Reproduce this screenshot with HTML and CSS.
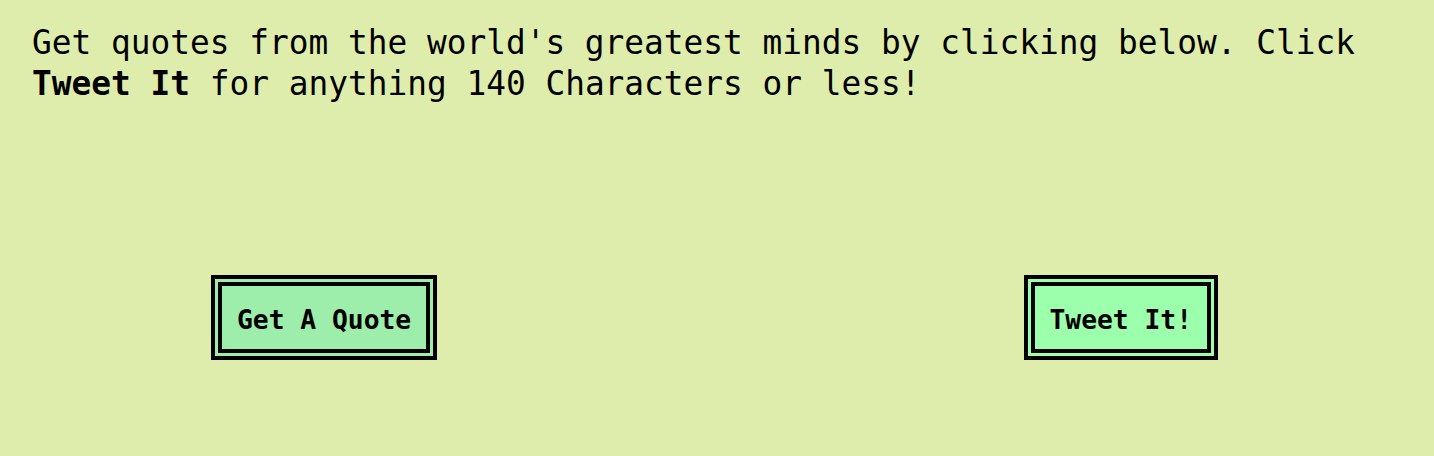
FILE: index.html
```html
<!DOCTYPE html>
<html>
<head>
<meta charset="utf-8">
<link rel="stylesheet" href="styles.css">
</head>
<body>
<div class="page">
  <p class="intro">Get quotes from the world's greatest minds by clicking below. Click <strong>Tweet It</strong> for anything 140 Characters or less!</p>
  <div class="actions">
    <button class="btn btn-quote">Get A Quote</button>
    <button class="btn btn-tweet">Tweet It!</button>
  </div>
</div>
</body>
</html>
```

FILE: styles.css
```css
html, body {
  margin: 0;
  padding: 0;
  background: #deedab;
}
.page {
  padding: 23px 32px 0 32px;
  font-family: "DejaVu Sans Mono", "Liberation Mono", monospace;
  color: #000;
}
.intro {
  margin: 0;
  font-size: 32.8px;
  line-height: 41px;
  width: 1370px;
}
.intro strong {
  font-weight: bold;
}
.actions {
  display: flex;
  justify-content: space-between;
  align-items: flex-start;
  margin-top: 170px;
  padding: 0 184px 0 179px;
}
.btn {
  font-family: "DejaVu Sans Mono", "Liberation Mono", monospace;
  font-weight: bold;
  font-size: 26.3px;
  line-height: 32px;
  color: #000;
  border: 11px double #000;
  padding: 18px 15px 13px 15px;
  margin: 0;
  cursor: pointer;
}
.btn-quote {
  background: #9ceeaa;
}
.btn-tweet {
  background: #9cffac;
}
```
